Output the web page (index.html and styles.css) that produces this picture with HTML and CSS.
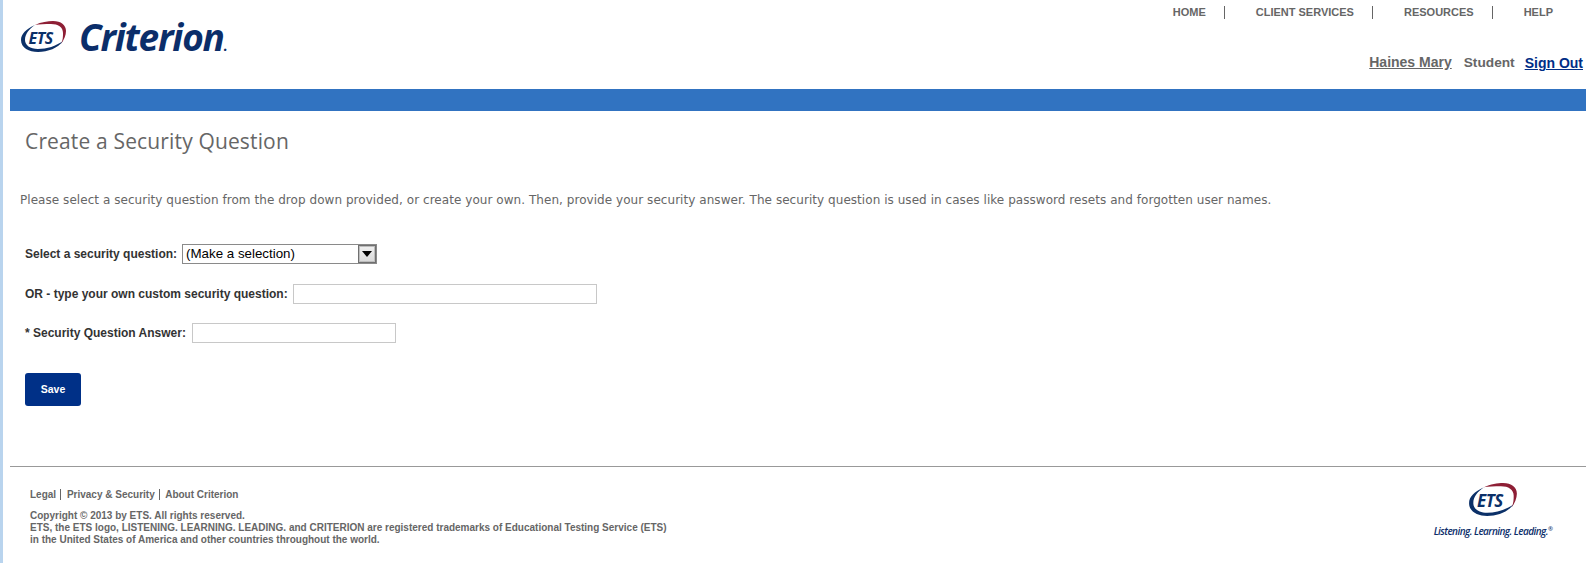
FILE: index.html
```html
<!DOCTYPE html>
<html lang="en">
<head>
    <meta charset="UTF-8">
    <title>Create a Security Question</title>
    <link rel="stylesheet" href="styles.css">
</head>
<body>
    <div class="page">
        <div class="header">
            <div class="brand">
                <svg class="ets-mark" viewBox="0 0 46 32" width="46" height="32">
                    <path d="M14 4C5 8 0 13 0 19c0 8 8 12 17 12 10 0 20-4 25-11-7 5-16 8-25 8-8 0-13-4-13-9 0-6 4-11 10-15z" fill="#0b3068"/>
                    <path d="M14 4c6-3 13-4 18-4 8 0 13 4 13 10 0 4-2 9-5 13 2-4 2-8 2-11 0-6-5-9-12-9-6 0-12 0-16 1z" fill="#8e1f35"/>
                    <text x="7.5" y="22.5" class="ets-text">ETS</text>
                </svg>
                <span class="brand-name">Criterion<span class="brand-dot">.</span></span>
            </div>
            <div class="header-right">
                <ul class="top-nav">
                    <li><a href="#">HOME</a></li>
                    <li><a href="#">CLIENT SERVICES</a></li>
                    <li><a href="#">RESOURCES</a></li>
                    <li><a href="#">HELP</a></li>
                </ul>
                <div class="user-row">
                    <a class="user-name" href="#">Haines Mary</a>
                    <span class="user-role">Student</span>
                    <a class="sign-out" href="#">Sign Out</a>
                </div>
            </div>
        </div>
        <div class="blue-bar"></div>

        <h1 class="page-title">Create a Security Question</h1>
        <p class="intro">Please select a security question from the drop down provided, or create your own. Then, provide your security answer. The security question is used in cases like password resets and forgotten user names.</p>

        <form class="question-form">
            <div class="form-row row-select">
                <label for="question">Select a security question:</label>
                <div class="fake-select" id="question">
                    <span class="select-value">(Make a selection)</span>
                    <span class="select-arrow"></span>
                </div>
            </div>
            <div class="form-row row-custom">
                <label for="custom">OR - type your own custom security question:</label>
                <input type="text" id="custom" class="input-long">
            </div>
            <div class="form-row row-answer">
                <label for="answer">* Security Question Answer:</label>
                <input type="text" id="answer" class="input-short">
            </div>
            <button type="button" class="save-btn">Save</button>
        </form>

        <div class="footer">
            <div class="footer-text">
                <div class="footer-links">
                    <a href="#">Legal</a>
                    <a href="#">Privacy &amp; Security</a>
                    <a href="#">About Criterion</a>
                </div>
                <p>Copyright &copy; 2013 by ETS. All rights reserved.<br>
                ETS, the ETS logo, LISTENING. LEARNING. LEADING. and CRITERION are registered trademarks of Educational Testing Service (ETS)<br>
                in the United States of America and other countries throughout the world.</p>
            </div>
            <div class="footer-logo">
                <svg viewBox="0 0 46 32" width="49" height="34">
                    <path d="M14 4C5 8 0 13 0 19c0 8 8 12 17 12 10 0 20-4 25-11-7 5-16 8-25 8-8 0-13-4-13-9 0-6 4-11 10-15z" fill="#0b3068"/>
                    <path d="M14 4c6-3 13-4 18-4 8 0 13 4 13 10 0 4-2 9-5 13 2-4 2-8 2-11 0-6-5-9-12-9-6 0-12 0-16 1z" fill="#8e1f35"/>
                    <text x="7.5" y="22.5" class="ets-text">ETS</text>
                </svg>
                <div class="tagline">Listening. Learning. Leading.<sup>&reg;</sup></div>
            </div>
        </div>
    </div>
</body>
</html>
```

FILE: styles.css
```css
html, body {
    margin: 0;
    padding: 0;
    background-color: #fff;
}
body {
    font-family: "Liberation Sans", Arial, sans-serif;
    color: #666;
    overflow: hidden;
}
a {
    color: inherit;
}
.page {
    height: 563px;
    box-sizing: border-box;
    border-left: 3px solid #b9d4ee;
    padding-left: 7px;
}

/* header */
.header {
    display: flex;
    justify-content: space-between;
    height: 89px;
}
.brand {
    display: flex;
    align-items: flex-start;
    padding: 21px 0 0 11px;
}
.ets-mark {
    display: block;
}
.ets-text {
    font-family: "Open Sans", sans-serif;
    font-style: italic;
    font-weight: 700;
    font-size: 16px;
    letter-spacing: -0.5px;
    fill: #0b3068;
}
.brand-name {
    margin: -9px 0 0 12px;
    font-family: "Open Sans", sans-serif;
    font-style: italic;
    font-weight: 700;
    font-size: 37px;
    line-height: 50px;
    letter-spacing: -1.2px;
    color: #0b2e6a;
}
.brand-dot {
    font-size: 14px;
}
.header-right {
    width: 500px;
}
.top-nav {
    list-style: none;
    margin: 0;
    padding: 6px 0 0 0;
    display: flex;
    justify-content: flex-end;
    font-size: 11px;
    font-weight: bold;
    line-height: 13px;
}
.top-nav a {
    text-decoration: none;
}
.top-nav li {
    padding: 0 18px 0 31px;
    border-right: 1px solid #666;
}
.top-nav li:last-child {
    border-right: none;
    padding-right: 33px;
}
.user-row {
    display: flex;
    justify-content: flex-end;
    align-items: flex-start;
    gap: 12px;
    margin-top: 35px;
    font-weight: bold;
    font-size: 14px;
    line-height: 16px;
    padding-right: 3px;
}
.user-role {
    margin-top: 1px;
    font-size: 13.7px;
}
.sign-out {
    margin: 1px 0 0 -2px;
    color: #002d86;
}
.blue-bar {
    height: 22px;
    background-color: #3173c1;
}

/* main content */
.page-title {
    margin: 14px 0 0 15px;
    font-family: "Open Sans", sans-serif;
    font-weight: 400;
    font-size: 21px;
    line-height: 32px;
    letter-spacing: 0.15px;
    color: #666;
}
.intro {
    margin: 35px 0 0 10px;
    font-family: "DejaVu Sans", Verdana, sans-serif;
    font-size: 12px;
    line-height: 16px;
    letter-spacing: 0.05px;
}
.question-form {
    margin: 36px 0 0 15px;
}
.form-row {
    display: flex;
    align-items: center;
    gap: 5px;
    height: 20px;
    font-size: 12px;
    font-weight: bold;
    color: #333;
}
.row-custom {
    margin-top: 20px;
}
.row-answer {
    margin-top: 19px;
}
.fake-select {
    display: flex;
    justify-content: space-between;
    align-items: center;
    box-sizing: border-box;
    width: 195px;
    height: 20px;
    padding: 0 0 0 3px;
    border: 1px solid #8a8a8a;
    font-size: 13.33px;
    font-weight: normal;
    color: #000;
}
.select-value {
    padding-bottom: 1px;
}
.select-arrow {
    display: flex;
    justify-content: center;
    align-items: center;
    box-sizing: border-box;
    width: 18px;
    height: 18px;
    background: linear-gradient(#f0f0f0, #d8d8d8);
    border: 1px solid #707070;
    box-shadow: inset 0 0 0 1px #bdbdbd;
}
.select-arrow::after {
    content: "";
    border-left: 5px solid transparent;
    border-right: 5px solid transparent;
    border-top: 6px solid #000;
}
.form-row input {
    box-sizing: border-box;
    height: 20px;
    margin: 0;
    border: 1px solid #c8c8c8;
    padding: 0 3px;
}
.form-row .input-long {
    width: 304px;
}
.form-row .input-short {
    width: 204px;
    margin-left: 1px;
}
.save-btn {
    display: block;
    margin-top: 30px;
    width: 56px;
    height: 33px;
    border: none;
    border-radius: 3px;
    background-color: #003087;
    color: #fff;
    font-family: "Liberation Sans", Arial, sans-serif;
    font-size: 10.5px;
    font-weight: bold;
    padding: 0 0 1px 0;
}

/* footer */
.footer {
    display: flex;
    justify-content: space-between;
    margin-top: 60px;
    border-top: 1px solid #999;
    font-size: 10px;
    font-weight: bold;
    line-height: 12px;
}
.footer-text {
    padding: 22px 0 0 20px;
}
.footer-links a {
    text-decoration: none;
    padding-right: 4px;
    margin-right: 3px;
    border-right: 1px solid #666;
}
.footer-links a:last-child {
    border-right: none;
}
.footer-text p {
    margin: 9px 0 0 0;
}
.footer-logo {
    width: 120px;
    margin: 16px 33px 0 0;
    text-align: center;
}
.footer-logo svg {
    display: block;
    margin: 0 auto;
}
.tagline {
    margin-top: 8px;
    font-family: "Open Sans", sans-serif;
    font-style: italic;
    font-weight: 600;
    font-size: 10px;
    letter-spacing: -0.55px;
    white-space: nowrap;
    color: #0b2e6a;
}
.tagline sup {
    font-size: 6px;
    line-height: 0;
}
```
